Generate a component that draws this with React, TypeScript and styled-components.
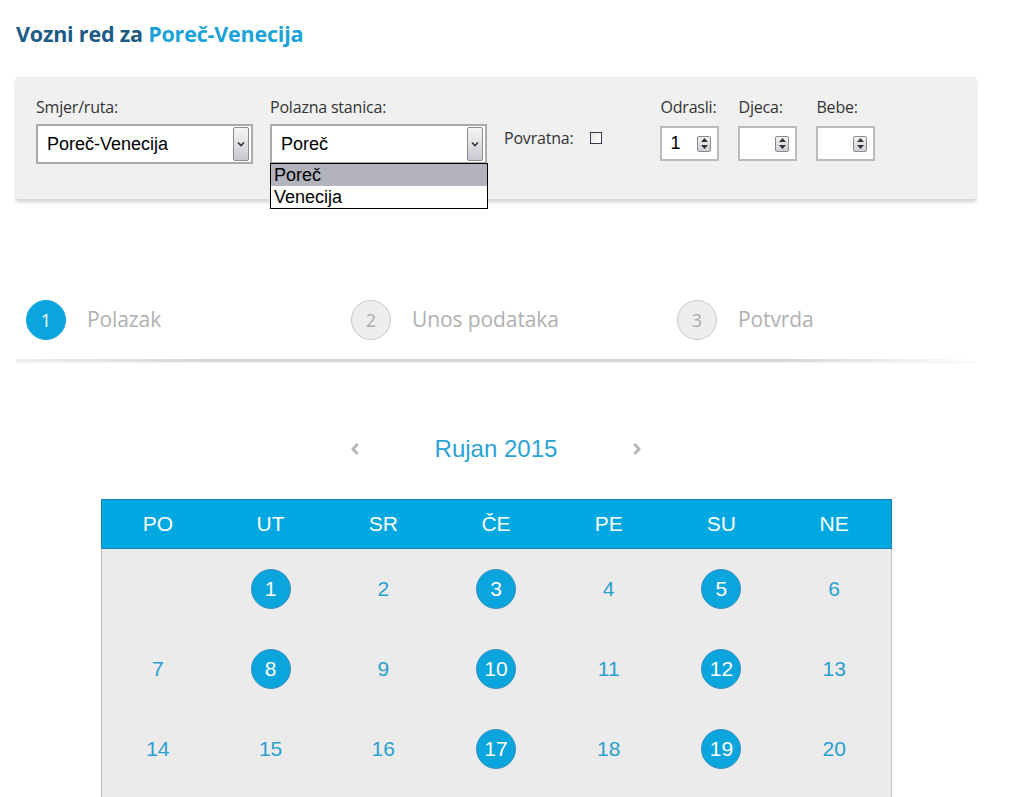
import React from "react";
import styled, { createGlobalStyle } from "styled-components";

const GlobalStyle = createGlobalStyle`
  body {
    margin: 0;
    background: #fff;
    font-family: "Open Sans", "Liberation Sans", sans-serif;
  }
`;

const Page = styled.div`
  width: 960px;
  margin-left: 16px;
  padding-top: 19px;
`;

const Title = styled.h1`
  margin: 0;
  font-size: 21.5px;
  line-height: 30px;
  font-weight: 700;
  color: #1b5b86;
  letter-spacing: -0.2px;
  span {
    color: #1aa3d9;
  }
`;

const FilterPanel = styled.div`
  margin-top: 28px;
  height: 122px;
  box-sizing: border-box;
  padding: 20px 20px 0 20px;
  background: #f0f0f0;
  box-shadow: 0 3px 4px rgba(0, 0, 0, 0.18);
  display: flex;
  align-items: flex-start;
`;

const Field = styled.div<{ $gap?: number }>`
  position: relative;
  display: flex;
  flex-direction: column;
  margin-right: ${(p) => p.$gap ?? 17}px;
`;

const Label = styled.label`
  font-size: 16px;
  line-height: 20px;
  color: #333;
  letter-spacing: -0.2px;
`;

const SelectBox = styled.div`
  margin-top: 7px;
  width: 217px;
  height: 40px;
  box-sizing: border-box;
  border: 2px solid #aaa;
  background: #fff;
  display: flex;
  align-items: center;
  justify-content: space-between;
  padding: 0 2px 0 9px;
  font-family: "Liberation Sans", Arial, sans-serif;
  font-size: 18px;
  color: #000;
`;

const SelectButton = styled.div`
  width: 16px;
  height: 34px;
  box-sizing: border-box;
  border: 1px solid #8a8a8a;
  border-radius: 2px;
  background: linear-gradient(#f6f6f6, #c9c9d2);
  display: flex;
  align-items: center;
  justify-content: center;
`;

const OptionList = styled.div`
  position: absolute;
  top: 66px;
  left: 0;
  width: 218px;
  box-sizing: border-box;
  border: 1px solid #000;
  background: #fff;
  font-family: "Liberation Sans", Arial, sans-serif;
  font-size: 18px;
  color: #000;
  z-index: 2;
`;

const Option = styled.div<{ $active?: boolean }>`
  height: 22px;
  line-height: 22px;
  padding-left: 3px;
  background: ${(p) => (p.$active ? "#b3b3bd" : "#fff")};
`;

const InlineField = styled.div`
  padding-top: 31px;
  display: flex;
  align-items: center;
  gap: 17px;
  margin-right: 58px;
`;

const CheckBox = styled.span`
  width: 12px;
  height: 12px;
  box-sizing: border-box;
  border: 1px solid #333f4f;
  background: linear-gradient(135deg, #e6e6e6, #fff);
`;

const NumberBox = styled.div`
  margin-top: 9px;
  width: 59px;
  height: 35px;
  box-sizing: border-box;
  border: 2px solid #bbb;
  background: #fff;
  display: flex;
  align-items: center;
  justify-content: space-between;
  padding: 0 6px 0 8px;
  font-family: "Liberation Sans", Arial, sans-serif;
  font-size: 18px;
  color: #000;
`;

const Spinner = styled.div`
  width: 14px;
  height: 16px;
  box-sizing: border-box;
  border: 1px solid #8a8a8a;
  border-radius: 2px;
  background: linear-gradient(#f2f2f2, #cfcfd6);
  display: flex;
  flex-direction: column;
  align-items: center;
  justify-content: space-around;
`;

const Steps = styled.div`
  margin-top: 101px;
  display: grid;
  grid-template-columns: 325px 326px 1fr;
  padding-bottom: 22px;
  position: relative;
  &::after {
    content: "";
    position: absolute;
    left: 0;
    right: 0;
    bottom: 0;
    height: 3px;
    background: linear-gradient(90deg, rgba(200, 200, 200, 0.3), #d6d6d6 20%, #d6d6d6 80%, rgba(220, 220, 220, 0));
    box-shadow: 0 1px 2px rgba(0, 0, 0, 0.06);
  }
`;

const Step = styled.div`
  display: flex;
  align-items: center;
  padding-left: 10px;
  gap: 21px;
`;

const StepCircle = styled.span<{ $active?: boolean }>`
  width: 40px;
  height: 40px;
  box-sizing: border-box;
  border-radius: 50%;
  display: flex;
  align-items: center;
  justify-content: center;
  font-size: 18px;
  background: ${(p) => (p.$active ? "#0aa5dd" : "#eeeeee")};
  border: 1px solid ${(p) => (p.$active ? "#0aa5dd" : "#c8c8c8")};
  color: ${(p) => (p.$active ? "#fff" : "#aaa")};
`;

const StepText = styled.span`
  font-size: 21px;
  line-height: 26px;
  color: #b0b0b0;
  letter-spacing: -0.1px;
  margin-top: -2px;
`;

const MonthNav = styled.div`
  margin-top: 72px;
  display: flex;
  justify-content: center;
  align-items: center;
  gap: 75px;
  height: 30px;
`;

const MonthTitle = styled.span`
  font-family: "Liberation Sans", Arial, sans-serif;
  font-size: 24px;
  color: #29a3d6;
`;

const Calendar = styled.div`
  width: 791px;
  margin: 35px auto 0;
`;

const CalHeader = styled.div`
  display: grid;
  grid-template-columns: repeat(7, 1fr);
  height: 50px;
  box-sizing: border-box;
  background: #00a8e2;
  border: 1px solid #1a7fae;
`;

const DayName = styled.div`
  display: flex;
  align-items: center;
  justify-content: center;
  font-family: "Liberation Sans", Arial, sans-serif;
  font-size: 21px;
  color: #fff;
`;

const CalBody = styled.div`
  display: grid;
  grid-template-columns: repeat(7, 1fr);
  grid-auto-rows: 80px;
  background: #ebebeb;
  border-left: 1px solid #c0c0c0;
  border-right: 1px solid #c0c0c0;
`;

const DayCell = styled.div`
  display: flex;
  align-items: center;
  justify-content: center;
`;

const DayNum = styled.span<{ $selected?: boolean }>`
  width: 40px;
  height: 40px;
  box-sizing: border-box;
  border-radius: 50%;
  display: flex;
  align-items: center;
  justify-content: center;
  font-family: "Liberation Sans", Arial, sans-serif;
  font-size: 21px;
  color: ${(p) => (p.$selected ? "#fff" : "#2a9fd0")};
  background: ${(p) => (p.$selected ? "#0aa5dd" : "transparent")};
  border: 1px solid ${(p) => (p.$selected ? "#3b90c0" : "transparent")};
`;

const Chevron = ({ dir }: { dir: "left" | "right" }) => (
  <svg width="10" height="14" viewBox="0 0 10 14">
    <path
      d={dir === "left" ? "M7.5 2 L3 7 L7.5 12" : "M2.5 2 L7 7 L2.5 12"}
      fill="none"
      stroke="#b5b5b5"
      strokeWidth="2.8"
    />
  </svg>
);

const DownArrow = () => (
  <svg width="8" height="6" viewBox="0 0 8 6">
    <path d="M1 1.5 L4 4.5 L7 1.5" fill="none" stroke="#333" strokeWidth="1.6" />
  </svg>
);

const SpinArrows = () => (
  <>
    <svg width="7" height="4" viewBox="0 0 7 4">
      <path d="M0 4 L3.5 0 L7 4 Z" fill="#333" />
    </svg>
    <svg width="7" height="4" viewBox="0 0 7 4">
      <path d="M0 0 L3.5 4 L7 0 Z" fill="#333" />
    </svg>
  </>
);

const dayNames = ["PO", "UT", "SR", "ČE", "PE", "SU", "NE"];
const selectedDays = [1, 3, 5, 8, 10, 12, 17, 19];

export default function App() {
  // rujan 2015 starts on tuesday
  const cells: (number | null)[] = [null];
  for (let d = 1; d <= 30; d++) cells.push(d);
  while (cells.length % 7) cells.push(null);

  return (
    <>
      <GlobalStyle />
      <Page>
        <Title>
          Vozni red za <span>Poreč-Venecija</span>
        </Title>

        <FilterPanel>
          <Field>
            <Label>Smjer/ruta:</Label>
            <SelectBox>
              Poreč-Venecija
              <SelectButton>
                <DownArrow />
              </SelectButton>
            </SelectBox>
          </Field>
          <Field>
            <Label>Polazna stanica:</Label>
            <SelectBox>
              Poreč
              <SelectButton>
                <DownArrow />
              </SelectButton>
            </SelectBox>
            <OptionList>
              <Option $active>Poreč</Option>
              <Option>Venecija</Option>
            </OptionList>
          </Field>
          <InlineField>
            <Label>Povratna:</Label>
            <CheckBox />
          </InlineField>
          <Field $gap={19}>
            <Label>Odrasli:</Label>
            <NumberBox>
              1
              <Spinner>
                <SpinArrows />
              </Spinner>
            </NumberBox>
          </Field>
          <Field $gap={19}>
            <Label>Djeca:</Label>
            <NumberBox>
              <span />
              <Spinner>
                <SpinArrows />
              </Spinner>
            </NumberBox>
          </Field>
          <Field>
            <Label>Bebe:</Label>
            <NumberBox>
              <span />
              <Spinner>
                <SpinArrows />
              </Spinner>
            </NumberBox>
          </Field>
        </FilterPanel>

        <Steps>
          <Step>
            <StepCircle $active>1</StepCircle>
            <StepText>Polazak</StepText>
          </Step>
          <Step>
            <StepCircle>2</StepCircle>
            <StepText>Unos podataka</StepText>
          </Step>
          <Step>
            <StepCircle>3</StepCircle>
            <StepText>Potvrda</StepText>
          </Step>
        </Steps>

        <MonthNav>
          <Chevron dir="left" />
          <MonthTitle>Rujan 2015</MonthTitle>
          <Chevron dir="right" />
        </MonthNav>

        <Calendar>
          <CalHeader>
            {dayNames.map((n) => (
              <DayName key={n}>{n}</DayName>
            ))}
          </CalHeader>
          <CalBody>
            {cells.map((d, i) => (
              <DayCell key={i}>
                {d && <DayNum $selected={selectedDays.includes(d)}>{d}</DayNum>}
              </DayCell>
            ))}
          </CalBody>
        </Calendar>
      </Page>
    </>
  );
}
